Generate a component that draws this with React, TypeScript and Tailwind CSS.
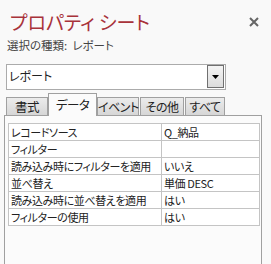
const rows: [string, string][] = [
  ["レコードソース", "Q_納品"],
  ["フィルター", ""],
  ["読み込み時にフィルターを適用", "いいえ"],
  ["並べ替え", "単価 DESC"],
  ["読み込み時に並べ替えを適用", "はい"],
  ["フィルターの使用", "はい"],
];

const tabs = ["書式", "データ", "イベント", "その他", "すべて"];

function CloseIcon() {
  return (
    <svg width="10" height="10" viewBox="0 0 10 10">
      <path d="M1 1L9 9M9 1L1 9" stroke="#666" strokeWidth="2" />
    </svg>
  );
}

export default function App() {
  return (
    <div className="relative w-[271px] h-[264px] overflow-hidden bg-[#f9f9f9] text-[#222] [font-family:'Noto_Sans_CJK_JP',sans-serif] [font-feature-settings:'palt']">
      <button className="absolute left-[249px] top-[17px] flex">
        <CloseIcon />
      </button>

      <div className="pl-[10px] pt-[9px] text-[19px] leading-[26px] text-[#a8323a] whitespace-nowrap">
        プロパティ シート
      </div>
      <div className="pl-[7px] pt-[2px] text-[11.5px] leading-[16px] text-[#444] whitespace-nowrap">
        選択の種類:&nbsp; レポート
      </div>

      <div className="ml-[6px] mt-[11px] flex h-[26px] w-[220px] justify-between border border-[#ababab] bg-white">
        <span className="pl-[2px] pt-[2px] text-[12px] leading-[18px]">レポート</span>
        <div className="mr-[1px] flex h-[23px] w-[17px] items-center justify-center border border-[#707070] bg-gradient-to-b from-[#f4f4f4] to-[#dcdcdc]">
          <svg width="7" height="4" viewBox="0 0 7 4">
            <path d="M0 0H7L3.5 4Z" fill="#000" />
          </svg>
        </div>
      </div>

      <div className="relative z-10 ml-[6px] mt-[3px] flex items-end gap-[1px] whitespace-nowrap text-[12px] tracking-[-0.5px]">
        {tabs.map((t, i) =>
          i === 1 ? (
            <div
              key={t}
              className="-mx-[1px] h-[23px] w-[49px] border border-b-0 border-[#a0a0a0] bg-[#fbfbfb] text-center text-[12.5px] leading-[21px]"
            >
              {t}
            </div>
          ) : (
            <div
              key={t}
              className={`h-[19px] border border-[#a0a0a0] bg-gradient-to-b from-[#ececec] to-[#d6d6d6] text-center leading-[17px] ${
                i === 0 ? "w-[42px] text-[12.5px]" : i === 2 ? "w-[42px]" : i === 3 ? "w-[44px]" : "w-[40px]"
              }`}
            >
              {t}
            </div>
          )
        )}
      </div>

      <div className="-mt-[1px] ml-[4px] h-[160px] w-[258px] border border-[#a0a0a0] bg-[#fbfbfb] pl-[3px] pt-[7px]">
        <table className="w-[252px] table-fixed border-collapse bg-white text-[11px] tracking-[-0.4px] whitespace-nowrap">
          <tbody>
            {rows.map(([k, v]) => (
              <tr key={k} className="h-[17px]">
                <td className="w-[153px] overflow-hidden border border-[#c4c4c4] px-[2px] py-0 leading-[15px]">{k}</td>
                <td className="overflow-hidden border border-[#c4c4c4] px-[2px] py-0 leading-[15px]">{v}</td>
              </tr>
            ))}
          </tbody>
        </table>
      </div>
    </div>
  );
}
